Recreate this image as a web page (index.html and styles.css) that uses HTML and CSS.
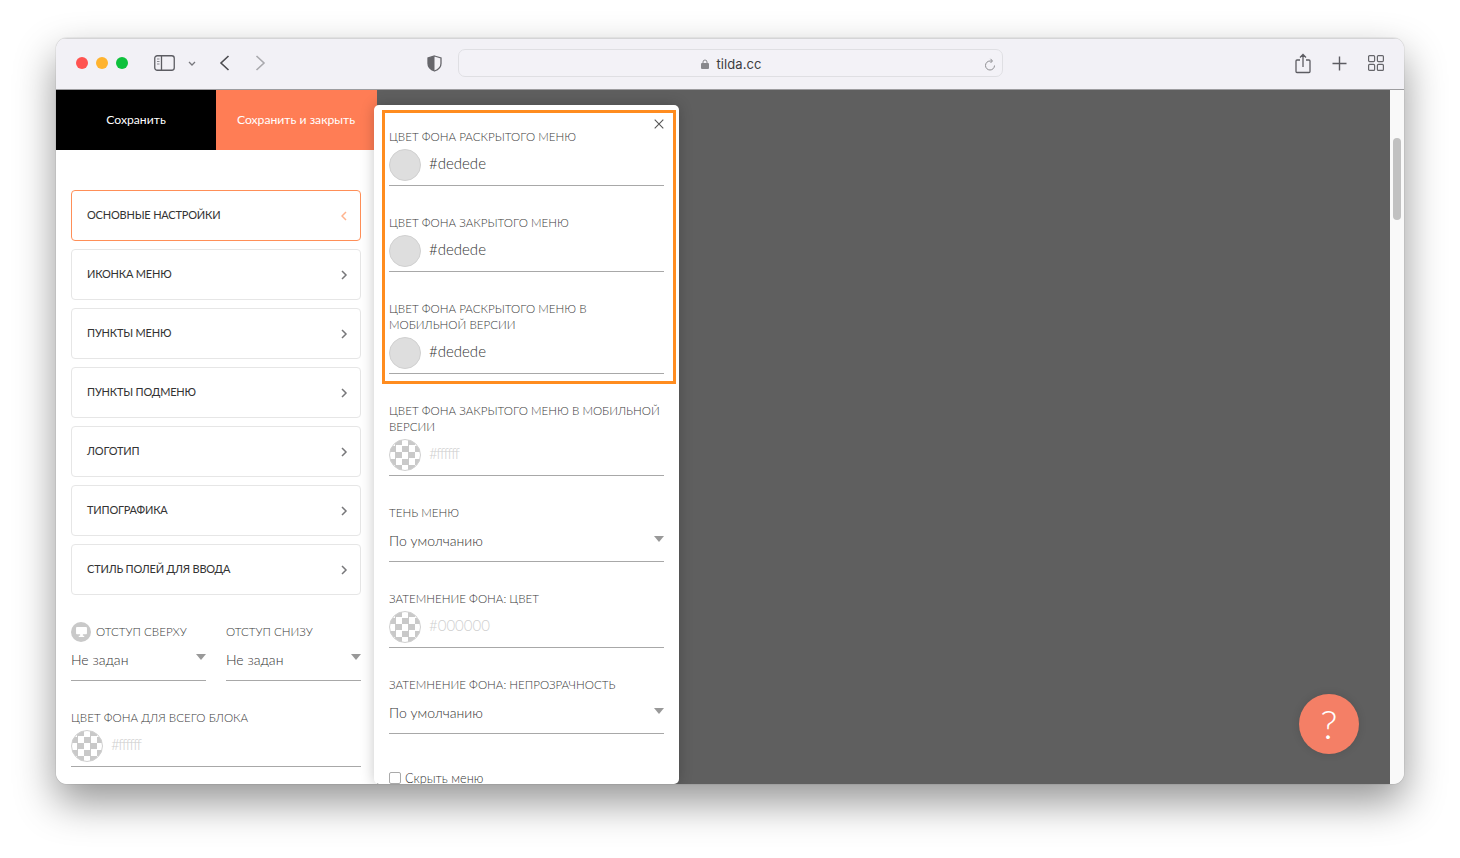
FILE: index.html
```html
<!DOCTYPE html>
<html lang="ru">
<head>
<meta charset="utf-8">
<title>tilda.cc</title>
<link rel="stylesheet" href="styles.css">
</head>
<body>
<div class="window">
  <header class="toolbar">
    <div class="lights"><i class="light red"></i><i class="light yellow"></i><i class="light green"></i></div>
    <svg class="ic sidebar" width="21" height="16" viewBox="0 0 21 16"><rect x=".75" y=".75" width="19.5" height="14.5" rx="2.5" fill="none" stroke="#5c5c62" stroke-width="1.3"/><path d="M7.5 1v14" stroke="#5c5c62" stroke-width="1.3"/><path d="M3 4h2.5M3 6.5h2.5M3 9h2.5" stroke="#8a8a90" stroke-width="1.2"/></svg>
    <svg class="ic caret" width="8" height="5" viewBox="0 0 8 5"><path d="M1 1l3 3 3-3" fill="none" stroke="#77777c" stroke-width="1.3"/></svg>
    <svg class="ic back" width="11" height="16" viewBox="0 0 11 16"><path d="M9.5 1L2 8l7.500 7" fill="none" stroke="#4c4c50" stroke-width="1.6"/></svg>
    <svg class="ic forward" width="11" height="16" viewBox="0 0 11 16"><path d="M1.500 1L9 8l-7.500 7" fill="none" stroke="#a9a9ad" stroke-width="1.6"/></svg>
    <svg class="ic shield" width="15" height="17" viewBox="0 0 15 17"><path d="M7.500 1L14 3v5.500c0 3.800-3 6.300-6.500 7.500C4 14.800 1 12.300 1 8.500V3z" fill="#f2f1f6" stroke="#66666b" stroke-width="1.300"/><path d="M7.500 1L1 3v5.500c0 3.800 3 6.300 6.500 7.500z" fill="#66666b"/></svg>
    <div class="address">
      <span class="url"><svg class="lock" width="8" height="10" viewBox="0 0 8 10"><rect y="4" width="8" height="6" rx="1" fill="#88888c"/><path d="M2 4.500V3a2 2 0 014 0v1.500" fill="none" stroke="#88888c"/></svg>tilda.cc</span>
      <svg class="reload" width="12" height="13" viewBox="0 0 12 13"><path d="M10.500 7.500A4.500 4.500 0 116 3h2M6.500 .8L8.500 3 6.500 5" fill="none" stroke="#8e8e92" stroke-width="1"/></svg>
    </div>
    <div class="tools">
      <svg width="16" height="21" viewBox="0 0 16 21"><path d="M5 7H2a1 1 0 00-1 1v10.500a1 1 0 001 1h12a1 1 0 001-1V8a1 1 0 00-1-1h-3M8 14V1.500M5 4.500l3-3 3 3" fill="none" stroke="#5c5c62" stroke-width="1.300"/></svg>
      <svg width="15" height="15" viewBox="0 0 15 15"><path d="M7.500 .5v14M.5 7.500h14" stroke="#5c5c62" stroke-width="1.400"/></svg>
      <svg width="16" height="16" viewBox="0 0 16 16"><g fill="none" stroke="#66666b" stroke-width="1.200"><rect x=".6" y=".6" width="6" height="6" rx="1"/><rect x="9.400" y=".6" width="6" height="6" rx="1"/><rect x=".6" y="9.400" width="6" height="6" rx="1"/><rect x="9.400" y="9.400" width="6" height="6" rx="1"/></g></svg>
    </div>
  </header>

  <div class="viewport">
    <aside class="panel">
      <div class="actions">
        <div class="action save">Сохранить</div>
        <div class="action save-close">Сохранить и закрыть</div>
      </div>
      <div class="panel-body">
        <ul class="sections">
          <li class="section active">ОСНОВНЫЕ НАСТРОЙКИ<svg width="7" height="10" viewBox="0 0 7 10"><path d="M5 1L1 5l4 4" fill="none" stroke-width="1.500"/></svg></li>
          <li class="section">ИКОНКА МЕНЮ<svg width="7" height="10" viewBox="0 0 7 10"><path d="M1 1l4 4-4 4" fill="none" stroke-width="1.500"/></svg></li>
          <li class="section">ПУНКТЫ МЕНЮ<svg width="7" height="10" viewBox="0 0 7 10"><path d="M1 1l4 4-4 4" fill="none" stroke-width="1.500"/></svg></li>
          <li class="section">ПУНКТЫ ПОДМЕНЮ<svg width="7" height="10" viewBox="0 0 7 10"><path d="M1 1l4 4-4 4" fill="none" stroke-width="1.500"/></svg></li>
          <li class="section">ЛОГОТИП<svg width="7" height="10" viewBox="0 0 7 10"><path d="M1 1l4 4-4 4" fill="none" stroke-width="1.500"/></svg></li>
          <li class="section">ТИПОГРАФИКА<svg width="7" height="10" viewBox="0 0 7 10"><path d="M1 1l4 4-4 4" fill="none" stroke-width="1.500"/></svg></li>
          <li class="section">СТИЛЬ ПОЛЕЙ ДЛЯ ВВОДА<svg width="7" height="10" viewBox="0 0 7 10"><path d="M1 1l4 4-4 4" fill="none" stroke-width="1.500"/></svg></li>
        </ul>
        <div class="paddings">
          <div class="field">
            <div class="label with-icon"><span class="device"><svg width="12" height="11" viewBox="0 0 12 11"><path d="M1 0h10a1 1 0 011 1v6a1 1 0 01-1 1H7.500v1.500H9V11H3V9.500h1.500V8H1a1 1 0 01-1-1V1a1 1 0 011-1z" fill="#fff"/></svg></span>ОТСТУП СВЕРХУ</div>
            <div class="select">Не задан<i class="arrow"></i></div>
          </div>
          <div class="field">
            <div class="label with-icon">ОТСТУП СНИЗУ</div>
            <div class="select">Не задан<i class="arrow"></i></div>
          </div>
        </div>
        <div class="field block-color">
          <div class="label">ЦВЕТ ФОНА ДЛЯ ВСЕГО БЛОКА</div>
          <div class="color"><i class="swatch empty"></i><span class="placeholder tight">#ffffff</span></div>
        </div>
      </div>
    </aside>

    <main class="stage"></main>
    <div class="scrollbar"><i class="thumb"></i></div>

    <section class="popup">
      <svg class="close" width="10" height="10" viewBox="0 0 10 10"><path d="M.7.7l8.600 8.600M9.300.7L.7 9.300" stroke="#555" stroke-width="1.100"/></svg>
      <div class="field">
        <div class="label">ЦВЕТ ФОНА РАСКРЫТОГО МЕНЮ</div>
        <div class="color"><i class="swatch filled"></i><span class="value">#dedede</span></div>
      </div>
      <div class="field">
        <div class="label">ЦВЕТ ФОНА ЗАКРЫТОГО МЕНЮ</div>
        <div class="color"><i class="swatch filled"></i><span class="value">#dedede</span></div>
      </div>
      <div class="field">
        <div class="label">ЦВЕТ ФОНА РАСКРЫТОГО МЕНЮ В МОБИЛЬНОЙ ВЕРСИИ</div>
        <div class="color"><i class="swatch filled"></i><span class="value">#dedede</span></div>
      </div>
      <div class="field">
        <div class="label">ЦВЕТ ФОНА ЗАКРЫТОГО МЕНЮ В МОБИЛЬНОЙ ВЕРСИИ</div>
        <div class="color"><i class="swatch empty"></i><span class="placeholder tight">#ffffff</span></div>
      </div>
      <div class="field">
        <div class="label">ТЕНЬ МЕНЮ</div>
        <div class="select">По умолчанию<i class="arrow"></i></div>
      </div>
      <div class="field">
        <div class="label">ЗАТЕМНЕНИЕ ФОНА: ЦВЕТ</div>
        <div class="color"><i class="swatch empty"></i><span class="placeholder">#000000</span></div>
      </div>
      <div class="field">
        <div class="label">ЗАТЕМНЕНИЕ ФОНА: НЕПРОЗРАЧНОСТЬ</div>
        <div class="select">По умолчанию<i class="arrow"></i></div>
      </div>
      <label class="check"><i class="box"></i>Скрыть меню</label>
    </section>

    <div class="highlight"></div>
    <div class="help">?</div>
  </div>
</div>
</body>
</html>
```
FILE: styles.css
```css
* { box-sizing: border-box; }
html, body { margin: 0; height: 100%; }
body {
  background: #fff;
  padding: 38px 56px 0;
  font-family: Lato, "Open Sans", sans-serif;
  color: #333;
  overflow: hidden;
}
i { display: block; }

.window {
  position: relative;
  width: 1348px;
  height: 746px;
  border-radius: 11px;
  overflow: hidden;
  display: flex;
  flex-direction: column;
}
body::before {
  content: "";
  position: absolute;
  left: 56px;
  top: 38px;
  width: 1348px;
  height: 746px;
  border-radius: 11px;
  box-shadow: 0 18px 40px rgba(0,0,0,.42), 0 0 1px rgba(0,0,0,.5);
}

.toolbar {
  position: relative;
  height: 52px;
  flex: none;
  background: #f2f1f6;
  border-top: 1px solid #d4d4d6;
  padding-bottom: 3px;
  display: flex;
  align-items: center;
}
.lights { display: flex; gap: 8px; margin-left: 20px; }
.light { width: 12px; height: 12px; border-radius: 50%; }
.red { background: #ff5350; }
.yellow { background: #ffb32e; }
.green { background: #0ec13c; }
.ic { flex: none; }
.sidebar { margin-left: 26px; }
.caret { margin-left: 13px; margin-top: 1px; }
.back { margin-left: 23px; }
.forward { margin-left: 25px; }
.shield { margin-left: 161px; margin-top: 1px; }
.address {
  margin-left: 16px;
  width: 545px;
  height: 28px;
  border: 1px solid #dfdfe3;
  border-radius: 7px;
  background: #f3f2f7;
  display: flex;
  align-items: center;
  justify-content: center;
  position: relative;
}
.url {
  font: 13px Inter, sans-serif;
  letter-spacing: .1px;
  color: #3d3d40;
  display: flex;
  align-items: center;
  gap: 7px;
  margin-top: 1px;
  margin-left: 2px;
}
.reload { position: absolute; right: 6px; top: 8px; }
.tools {
  margin-left: 292px;
  display: flex;
  align-items: center;
  gap: 21px;
}

.viewport {
  position: relative;
  flex: 1;
  display: flex;
  min-height: 0;
  border-top: 1px solid rgba(0,0,0,.35);
  margin-top: -1px;
}
.panel {
  width: 321px;
  flex: none;
  background: #fff;
}
.actions { display: flex; height: 60px; }
.action {
  display: flex;
  align-items: center;
  justify-content: center;
  color: #fff;
  font-size: 12.2px;
  font-weight: 400;
  padding-bottom: 2px;
}
.save { width: 160px; background: #000; }
.save-close { width: 161px; background: #ff7d55; padding-right: 1px; }
.panel-body { padding: 40px 16px 0 15px; }
.sections { list-style: none; margin: 0; padding: 0; display: flex; flex-direction: column; gap: 8px; }
.section {
  height: 51px;
  width: 290px;
  border: 1px solid #e6e6e6;
  border-radius: 4px;
  padding: 0 12px 2px 15px;
  display: flex;
  align-items: center;
  justify-content: space-between;
  font-size: 11px;
  letter-spacing: -.2px;
  color: #333;
}
.section svg { stroke: #77777a; margin-top: 3px; }
.section.active { border-color: #ff8f58; }
.section.active svg { stroke: #ffb38e; }

.label {
  font-size: 11.6px;
  line-height: 16px;
  font-weight: 300;
  color: #3a3a3a;
}
.with-icon { display: flex; align-items: center; height: 20px; }
.device {
  width: 20px;
  height: 20px;
  border-radius: 50%;
  background: #c9c9c9;
  margin-right: 5px;
  display: flex;
  align-items: center;
  justify-content: center;
}
.device svg { width: 11px; height: 10px; }
.paddings {
  display: grid;
  grid-template-columns: 135px 135px;
  gap: 20px;
  margin-top: 27px;
}
.select {
  position: relative;
  height: 37px;
  margin-top: 4px;
  border-bottom: 1px solid #a8a8a8;
  font-size: 14px;
  font-weight: 300;
  line-height: 32px;
  color: #333;
}
.paddings .select { margin-top: 0; height: 39px; line-height: 36px; }
.arrow {
  position: absolute;
  right: 0;
  top: 11px;
  width: 0;
  height: 0;
  border-left: 5px solid transparent;
  border-right: 5px solid transparent;
  border-top: 6px solid #999;
}
.paddings .arrow { top: 12px; }
.color {
  height: 37px;
  margin-top: 4px;
  border-bottom: 1px solid #a8a8a8;
  display: flex;
  gap: 8px;
  align-items: flex-start;
  font-size: 15px;
  font-weight: 300;
  line-height: 28px;
}
.swatch {
  width: 32px;
  height: 32px;
  border-radius: 50%;
  flex: none;
  border: 1px solid #d0d0d0;
}
.filled { background: #dedede; }
.empty {
  background: repeating-conic-gradient(#c9c9c9 0 25%, #fff 0 50%) -1px -1px / 13px 13px;
}
.value { color: #333; }
.placeholder { color: #cfcfcf; }
.tight { letter-spacing: -1.400px; }
.block-color { margin-top: 29px; }

.stage { flex: 1; background: #5f5f5f; }
.scrollbar { width: 14px; flex: none; background: #f9f9f9; position: relative; }
.thumb {
  position: absolute;
  left: 3px;
  top: 48px;
  width: 8px;
  height: 82px;
  border-radius: 4px;
  background: #c1c1c1;
}

.popup {
  position: absolute;
  left: 318px;
  top: 15px;
  width: 305px;
  height: 679px;
  background: #fff;
  border-radius: 5px;
  padding: 24px 15px 0;
  box-shadow: 0 0 14px rgba(0,0,0,.22);
  overflow: hidden;
  display: flex;
  flex-direction: column;
  gap: 29px;
}
.close { position: absolute; right: 15px; top: 14px; }
.check {
  display: flex;
  align-items: center;
  gap: 4px;
  flex: none;
  font-size: 12.700px;
  font-weight: 300;
  margin-top: 7px;
  line-height: 16px;
  color: #333;
}
.box { width: 12px; height: 12px; border: 1px solid #aaa; border-radius: 2px; }

.highlight {
  position: absolute;
  left: 326px;
  top: 20px;
  width: 294px;
  height: 274px;
  border: 3px solid #ff8c1f;
}
.help {
  position: absolute;
  left: 1243px;
  top: 604px;
  width: 60px;
  height: 60px;
  border-radius: 50%;
  background: #f47f66;
  color: #fff;
  font-size: 40px;
  font-weight: 300;
  line-height: 60px;
  text-align: center;
  box-shadow: 0 0 8px rgba(0,0,0,.12);
}
```
